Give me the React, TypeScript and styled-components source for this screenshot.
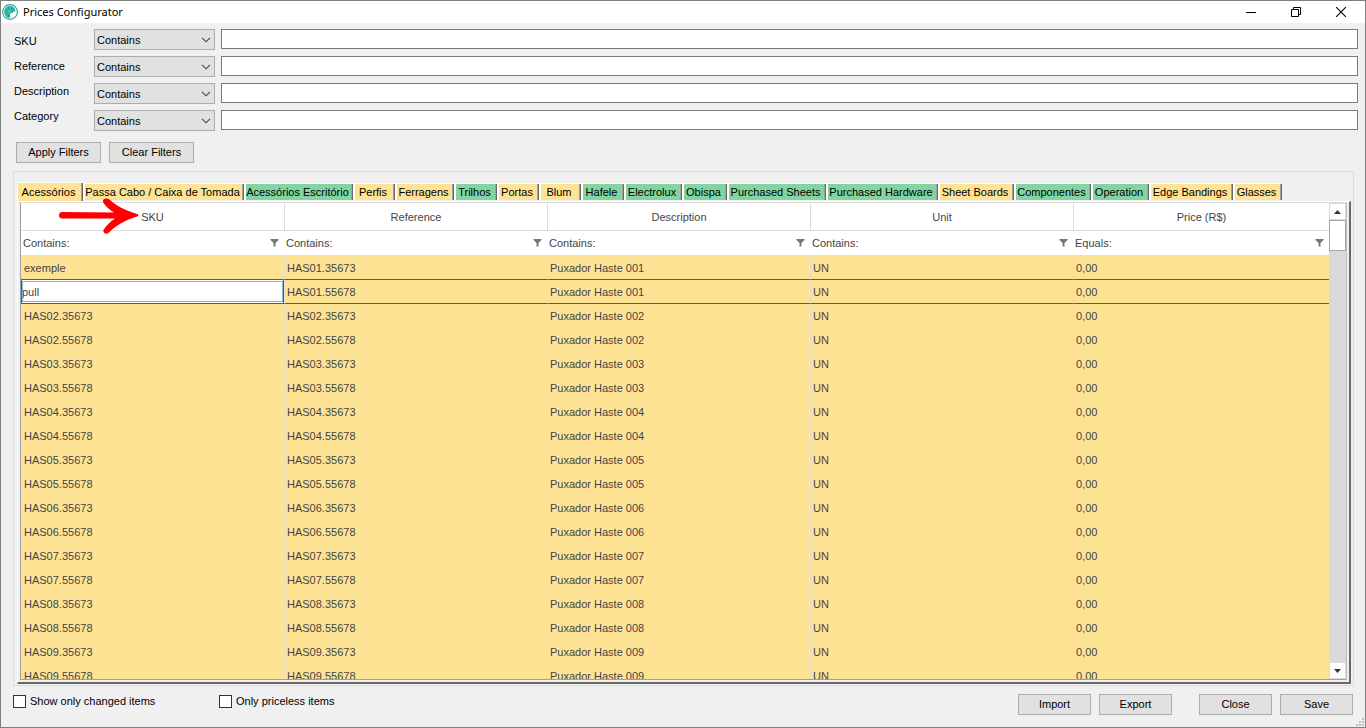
import React from "react";
import styled, { createGlobalStyle } from "styled-components";

const Global = createGlobalStyle`
  *, *::before, *::after { box-sizing: border-box; }
  html, body { margin: 0; height: 100%; }
  #root { height: 100%; }
  body { background: #f0f0f0; }
  button, input, select, table { font: inherit; color: inherit; }
`;

const Window = styled.div`
  display: flex;
  flex-direction: column;
  height: 100vh;
  min-height: 400px;
  border: 1px solid #7f7f7f;
  background: #f0f0f0;
  color: #000;
  font: 11px/16px "Liberation Sans", Arial, sans-serif;
`;

const TitleBar = styled.header`
  display: flex;
  align-items: center;
  flex: none;
  height: 22px;
  padding: 0 2px 0 1px;
  background: #fff;
`;

const Title = styled.h1`
  flex: 1;
  margin: 0 0 0 5px;
  font: 400 11px/20px "Noto Sans", "Segoe UI", sans-serif;
`;

const CaptionButton = styled.button`
  display: flex;
  align-items: center;
  justify-content: center;
  width: 45px;
  height: 20px;
  padding: 0;
  border: 0;
  background: none;
`;

const Filters = styled.section`
  display: flex;
  flex: none;
  padding: 6px 7px 0 13px;
`;

const FilterLabels = styled.div`
  display: flex;
  flex-direction: column;
  width: 80px;
  line-height: 25px;
`;

const FilterControls = styled.div`
  display: flex;
  flex: 1;
  flex-direction: column;
  gap: 6px;
`;

const FilterRow = styled.div`
  display: flex;
  gap: 6px;
  height: 21px;
`;

const SelectBox = styled.div`
  display: grid;
  width: 121px;
  align-items: center;
  > * { grid-area: 1 / 1; }
  svg { justify-self: end; margin-right: 4px; pointer-events: none; }
`;

const Select = styled.select`
  width: 100%;
  height: 21px;
  padding: 0 2px;
  border: 1px solid #adadad;
  border-radius: 0;
  background: #e1e1e1;
  appearance: none;
`;

const TextBox = styled.input`
  flex: 1;
  min-width: 0;
  height: 20px;
  padding: 0 3px;
  border: 1px solid #7a7a7a;
  background: #fff;
`;

const FilterActions = styled.div`
  display: flex;
  flex: none;
  gap: 8px;
  padding: 11px 15px 8px;
`;

const Button = styled.button<{ $width: number }>`
  width: ${(p) => p.$width}px;
  height: 21px;
  padding: 0 0 2px;
  border: 1px solid #adadad;
  background: #e1e1e1;
`;

const Group = styled.main`
  display: flex;
  flex: 1;
  flex-direction: column;
  min-height: 0;
  margin: 0 11px 0 12px;
  padding: 10px 2px 1px 3px;
  border: 1px solid #dcdcdc;
`;

const TabStrip = styled.div`
  display: flex;
  flex: none;
  align-items: flex-end;
  height: 19px;
`;

const Tab = styled.button<{ $width: number; $green?: boolean; $active?: boolean }>`
  flex: none;
  width: ${(p) => p.$width}px;
  height: ${(p) => (p.$active ? 19 : 17)}px;
  margin-bottom: ${(p) => (p.$active ? 0 : 1)}px;
  padding: 0 4px 0 0;
  border: 0 solid #fff;
  border-width: 1px 0 0 ${(p) => (p.$active ? 1 : 2)}px;
  box-shadow: inset -1px 0 #696969, inset -2px 0 #a0a0a0;
  background: ${(p) => (p.$green ? "#82d5a0" : "#ffe395")};
  overflow: hidden;
  white-space: nowrap;
  line-height: 15px;
`;

const TabPage = styled.div`
  display: flex;
  flex: 1;
  min-height: 0;
  border-style: solid;
  border-width: 1px 2px 2px 1px;
  border-color: #fff #696969 #696969 #fff;
  padding: 0 2px 2px;
`;

const GridFrame = styled.div`
  display: flex;
  flex: 1;
  min-width: 0;
  border: 1px solid #a0a0a0;
  border-top-color: #dcdcdc;
  border-right-color: #c0c0c0;
  background: #fff;
`;

const GridView = styled.div`
  flex: 1;
  min-width: 0;
  overflow: hidden;
`;

const Table = styled.table`
  width: 100%;
  border-collapse: separate;
  border-spacing: 0;
  table-layout: fixed;
  color: #444;
  th, td { font-weight: 400; text-align: left; }
`;

const HeadCell = styled.th`
  && { text-align: center; }
  height: 28px;
  padding: 0;
  border-bottom: 1px solid #dcdcdc;
  & + & { border-left: 1px solid #dcdcdc; }
`;

const FilterCell = styled.th`
  height: 25px;
  padding: 0 5px 0 2px;
  border-bottom: 1px solid #f3e0ac;
  div { display: flex; align-items: center; justify-content: space-between; }
`;

const Cell = styled.td<{ $selected?: boolean }>`
  height: 24px;
  padding: 0 2px;
  background: #ffe395;
  border-bottom: 1px solid ${(p) => (p.$selected ? "#0a73b8" : "#f3e0ac")};
  &:first-child { padding-left: 3px; }
  & + & { border-left: 1px solid #e8dccb; }
`;

const CellEditor = styled.input`
  display: block;
  width: calc(100% + 5px);
  height: 23px;
  margin: 0 -2px 0 -3px;
  padding: 0;
  border: 1px solid #0a73b8;
  border-width: 0 1px 0 1px;
  outline: 1px solid #7fb5db;
  outline-offset: -2px;
  background: #fff;
`;

const ScrollBar = styled.div`
  display: flex;
  flex: none;
  flex-direction: column;
  width: 17px;
  background: #d9d9d9;
`;

const ScrollButton = styled.button`
  display: flex;
  align-items: center;
  justify-content: center;
  flex: none;
  height: 17px;
  padding: 0;
  border: 1px solid #d9d9d9;
  background: #fff;
`;

const ScrollTrack = styled.div`
  flex: 1;
`;

const ScrollThumb = styled.div`
  height: 31px;
  border: 1px solid #a6a6a6;
  background: #fff;
`;

const Footer = styled.footer`
  display: flex;
  flex: none;
  height: 41px;
  padding: 8px 12px 0;
`;

const CheckLabel = styled.label`
  display: flex;
  gap: 4px;
  width: 206px;
  height: 16px;
  line-height: 14px;
`;

const CheckBox = styled.input`
  width: 13px;
  height: 13px;
  margin: 1px 0 0;
  border: 1px solid #333;
  background: #fff;
  appearance: none;
`;

const ButtonPair = styled.div<{ $first?: boolean }>`
  display: flex;
  gap: 8px;
  margin-left: ${(p) => (p.$first ? "auto" : "27px")};
`;

const Grip = styled.svg`
  position: absolute;
  right: 2px;
  bottom: 2px;
`;

const ArrowMark = styled.svg`
  position: absolute;
  left: 59px;
  top: 198px;
  pointer-events: none;
`;

const Logo = () => (
  <svg width="16" height="16" viewBox="0 0 16 16" aria-hidden="true">
    <circle cx="8" cy="8" r="7.4" fill="#fff" stroke="#20a797" strokeWidth="1.1" />
    <path
      d="M8.500 2C5 1.800 2.200 4.500 2.200 8c0 2.700 1.700 5 4.200 5.800L8.200 13.500 7.800 10.500 9 8.800l1.500.2.700-1.200 2.300-.8C13 4.200 11 2.100 8.500 2Z"
      fill="#20a797"
    />
    <path d="M7.500 8 4 4M7.500 8 8.500 2.500M7.500 8 2.500 8M7.500 8 12 5M7.500 8 4 12" stroke="#8dd8cd" strokeWidth=".5" />
  </svg>
);

const Chevron = () => (
  <svg width="10" height="6" viewBox="0 0 10 6" fill="none" stroke="#444" strokeWidth="1.1" aria-hidden="true">
    <path d="m1 .8 4 4 4-4" />
  </svg>
);

const Funnel = () => (
  <svg width="9" height="8" viewBox="0 0 9 8" fill="#777" aria-hidden="true">
    <path d="M.5 0h8v1L5.500 4v3.500h-2V4L.5 1Z" />
  </svg>
);

const Triangle = ({ down = false }: { down?: boolean }) => (
  <svg width="7" height="4" viewBox="0 0 7 4" fill="#333" aria-hidden="true">
    <path d={down ? "M0 0h7L3.500 4Z" : "M0 4h7L3.500 0Z"} />
  </svg>
);

const filters = ["SKU", "Reference", "Description", "Category"];

const tabs: { name: string; width: number; green?: boolean }[] = [
  { name: "Acessórios", width: 66 },
  { name: "Passa Cabo / Caixa de Tomada", width: 161 },
  { name: "Acessórios Escritório", width: 109, green: true },
  { name: "Perfis", width: 42 },
  { name: "Ferragens", width: 59 },
  { name: "Trilhos", width: 43, green: true },
  { name: "Portas", width: 42 },
  { name: "Blum", width: 42 },
  { name: "Hafele", width: 43, green: true },
  { name: "Electrolux", width: 58, green: true },
  { name: "Obispa", width: 45, green: true },
  { name: "Purchased Sheets", width: 99, green: true },
  { name: "Purchased Hardware", width: 112, green: true },
  { name: "Sheet Boards", width: 76 },
  { name: "Componentes", width: 77, green: true },
  { name: "Operation", width: 58, green: true },
  { name: "Edge Bandings", width: 84 },
  { name: "Glasses", width: 49 },
];

const columns = [
  { name: "SKU", match: "Contains:", width: "263px" },
  { name: "Reference", match: "Contains:", width: "263px" },
  { name: "Description", match: "Contains:", width: "263px" },
  { name: "Unit", match: "Contains:", width: "263px" },
  { name: "Price (R$)", match: "Equals:", width: "auto" },
];

const rows = Array.from({ length: 18 }, (_, i) => {
  const n = String(Math.floor(i / 2) + 1).padStart(2, "0");
  const reference = `HAS${n}.${i % 2 ? "55678" : "35673"}`;
  const sku = i === 0 ? "exemple" : i === 1 ? "pull" : reference;
  return { sku, reference, description: `Puxador Haste 0${n}` };
});

export default function App() {
  return (
    <Window>
      <Global />
      <TitleBar>
        <Logo />
        <Title>Prices Configurator</Title>
        <CaptionButton aria-label="Minimize">
          <svg width="10" height="10" stroke="#000"><path d="M0 5.500h10" /></svg>
        </CaptionButton>
        <CaptionButton aria-label="Restore">
          <svg width="10" height="10" fill="none" stroke="#000">
            <path d="M.5 2.500h7v7h-7ZM2.500 2.500v-2h7v7h-2" />
          </svg>
        </CaptionButton>
        <CaptionButton aria-label="Close window">
          <svg width="10" height="10" stroke="#000" strokeWidth="1.1"><path d="m0 0 10 10M10 0 0 10" /></svg>
        </CaptionButton>
      </TitleBar>

      <Filters>
        <FilterLabels>
          {filters.map((f) => <label key={f} htmlFor={`filter-${f}`}>{f}</label>)}
        </FilterLabels>
        <FilterControls>
          {filters.map((f) => (
            <FilterRow key={f}>
              <SelectBox>
                <Select aria-label={`${f} match`}><option>Contains</option></Select>
                <Chevron />
              </SelectBox>
              <TextBox id={`filter-${f}`} />
            </FilterRow>
          ))}
        </FilterControls>
      </Filters>
      <FilterActions>
        <Button $width={85}>Apply Filters</Button>
        <Button $width={85}>Clear Filters</Button>
      </FilterActions>

      <Group>
        <TabStrip role="tablist">
          {tabs.map((t, i) => (
            <Tab key={t.name} role="tab" aria-selected={i === 0} $active={i === 0} $width={t.width} $green={t.green}>
              {t.name}
            </Tab>
          ))}
        </TabStrip>
        <TabPage>
          <GridFrame>
            <GridView>
              <Table>
                <colgroup>
                  {columns.map((c) => <col key={c.name} style={{ width: c.width }} />)}
                </colgroup>
                <thead>
                  <tr>{columns.map((c) => <HeadCell key={c.name}>{c.name}</HeadCell>)}</tr>
                  <tr>
                    {columns.map((c) => (
                      <FilterCell key={c.name}><div>{c.match}<Funnel /></div></FilterCell>
                    ))}
                  </tr>
                </thead>
                <tbody>
                  {rows.map((r, i) => (
                    <tr key={r.reference}>
                      <Cell $selected={i < 2}>
                        {i === 1 ? <CellEditor aria-label="SKU" defaultValue={r.sku} /> : r.sku}
                      </Cell>
                      <Cell $selected={i < 2}>{r.reference}</Cell>
                      <Cell $selected={i < 2}>{r.description}</Cell>
                      <Cell $selected={i < 2}>UN</Cell>
                      <Cell $selected={i < 2}>0,00</Cell>
                    </tr>
                  ))}
                </tbody>
              </Table>
            </GridView>
            <ScrollBar>
              <ScrollButton aria-label="Scroll up"><Triangle /></ScrollButton>
              <ScrollTrack><ScrollThumb /></ScrollTrack>
              <ScrollButton aria-label="Scroll down"><Triangle down /></ScrollButton>
            </ScrollBar>
          </GridFrame>
        </TabPage>
      </Group>

      <Footer>
        <CheckLabel><CheckBox type="checkbox" />Show only changed items</CheckLabel>
        <CheckLabel><CheckBox type="checkbox" />Only priceless items</CheckLabel>
        <ButtonPair $first>
          <Button $width={73}>Import</Button>
          <Button $width={73}>Export</Button>
        </ButtonPair>
        <ButtonPair>
          <Button $width={73}>Close</Button>
          <Button $width={73}>Save</Button>
        </ButtonPair>
      </Footer>

      <Grip width="8" height="8" fill="#bfbfbf" aria-hidden="true">
        <path d="M6 0h2v2H6ZM3 3h2v2H3ZM6 3h2v2H6ZM0 6h2v2H0ZM3 6h2v2H3ZM6 6h2v2H6Z" />
      </Grip>
      <ArrowMark width="80" height="37" viewBox="0 0 80 37" aria-hidden="true">
        <path
          d="M3 14C1 14 0 15.500 0 17.200S1 20.500 3 20.600L56 20.600C51 24 47.500 27.500 44.800 31.500 43 34.500 46.500 37 49.500 35 56 28 66 22 78 18.500 80 18 80 16.500 78 16 66 12.500 57 7.500 51 2 48-1 42 .5 44.500 5 47 9 51 12 55 14.500Z"
          fill="#ff0000"
        />
      </ArrowMark>
    </Window>
  );
}
